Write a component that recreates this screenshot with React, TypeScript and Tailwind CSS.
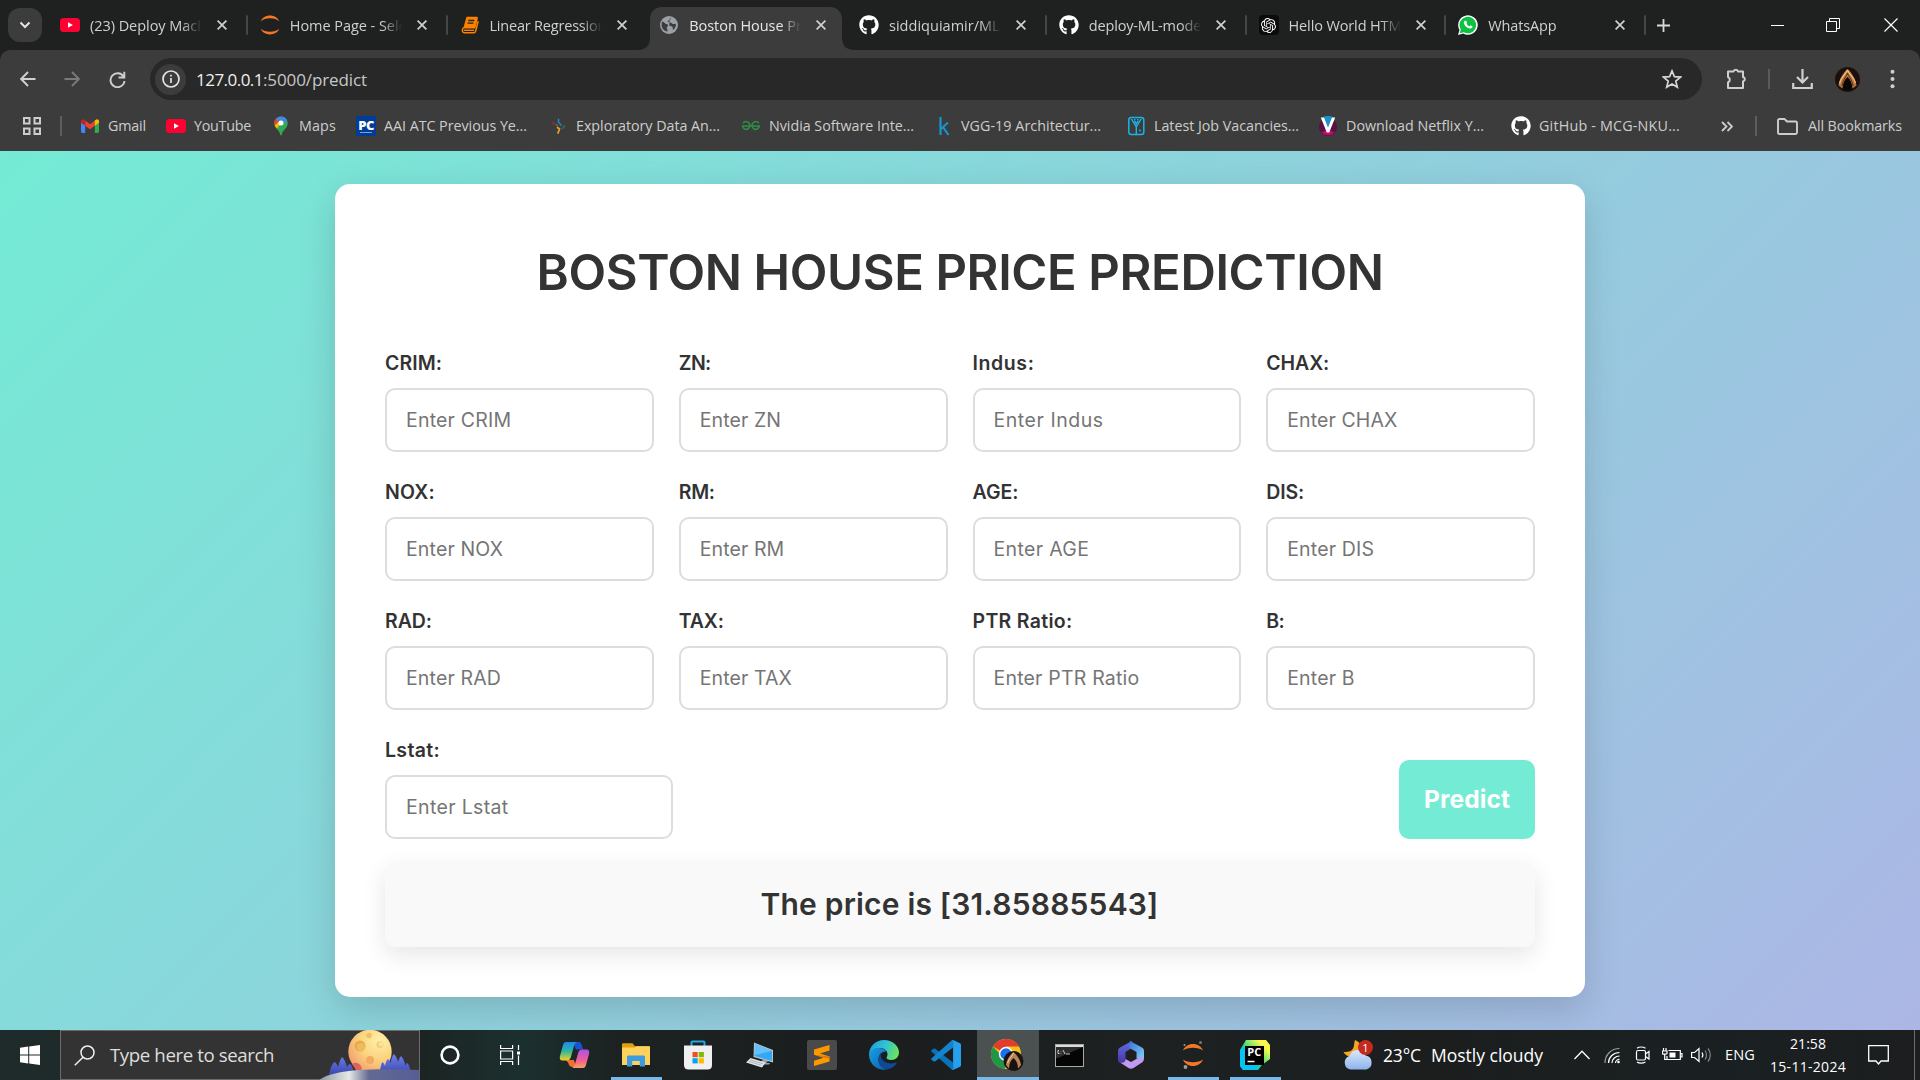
import React, { useLayoutEffect, useRef, useState } from "react";
import { FaGithub } from "react-icons/fa";
import { SiOpenai } from "react-icons/si";

/* Spreads a line of text over the width of its box by adjusting the letter spacing. */
function Fit({ text, className }: { text: string; className: string }) {
  const box = useRef<HTMLSpanElement>(null);
  const inner = useRef<HTMLSpanElement>(null);
  const [spacing, setSpacing] = useState(0);
  useLayoutEffect(() => {
    if (!box.current || !inner.current) return;
    const have = inner.current.getBoundingClientRect().width;
    const want = box.current.getBoundingClientRect().width;
    setSpacing((want - have) / text.length);
  }, [text]);
  return (
    <span ref={box} className={`block shrink-0 whitespace-pre ${className}`}>
      <span ref={inner} className="inline-block" style={{ letterSpacing: `${spacing}px` }}>
        {text}
      </span>
    </span>
  );
}

/* ---------- small icons ---------- */

const YouTubeIcon = () => (
  <svg width="20" height="20" viewBox="0 0 20 20">
    <rect x="0" y="3" width="20" height="14" rx="3.5" fill="#ff0033" />
    <path d="M8 7.2v5.6l4.9-2.8z" fill="#fff" />
  </svg>
);

const JupyterTabIcon = () => (
  <svg width="20" height="20" viewBox="0 0 20 20" fill="#f37726">
    <path d="M.6 6.2C2.4 2.600 5.900.5 10 .5s7.600 2.100 9.400 5.700C17 4.200 13.700 3.200 10 3.200S3 4.200.6 6.200z" />
    <path d="M.6 13.800c1.800 3.600 5.300 5.700 9.400 5.700s7.600-2.100 9.400-5.700c-2.400 2-5.700 3-9.400 3s-7-1-9.400-3z" />
  </svg>
);

const NotebookIcon = () => (
  <svg width="20" height="20" viewBox="0 0 20 20">
    <path d="M6.500 1.800h10c1 0 1.500.7 1.300 1.600l-2.500 10H3.200z" fill="#f98200" />
    <path d="M3.400 12.500C1.800 15.500 2.200 17.700 4.200 17.700h9.600c.9 0 1.500-.5 1.800-1.500l2.600-10" fill="none" stroke="#f98200" strokeWidth="1.500" />
    <path d="M4 15.300h10" stroke="#f98200" strokeWidth="1.400" />
    <path d="M8.300 5.500h6M7.500 8.200h6" stroke="#2b2118" strokeWidth="1.300" />
  </svg>
);

const GlobeIcon = () => (
  <svg width="20" height="20" viewBox="0 0 20 20">
    <circle cx="10" cy="10" r="9" fill="#9aa0a6" />
    <path
      d="M3 6.500c1.800 0 2.200 1.500 3.500 2.200 1 .6 2.600.3 2.600 1.600 0 1.100-1.500 1.200-1.300 2.600.1 1.300 1 1.800.8 3.600-3.500-.4-6-3.200-6-6.500 0-1.300.1-2.400.4-3.500zM11 2.700c1.300.7.700 1.800-.1 2.300-.8.600-2.200.5-2.200 1.600 0 1 1.500.7 2.600.9 1.300.2 1.600 1.400 2.900 1.500 1 .1 1.600-.5 2.700-.3.200 2.600-.9 4.900-2.900 6.300-.4-1.300.2-2.500-.7-3.300-.9-.8-2.700-.3-3.100-1.600"
      fill="#3c3c3c"
    />
  </svg>
);

const GithubIcon = () => <FaGithub size={20} color="#ffffff" />;

const OpenAIIcon = () => (
  <span className="flex h-5 w-5 items-center justify-center rounded-[4px] bg-[#0b0b0b]">
    <SiOpenai size={15} color="#ffffff" />
  </span>
);

const WhatsAppIcon = () => (
  <svg width="20" height="20" viewBox="0 0 20 20">
    <path d="M0 20l1.500-5A9.800 9.800 0 1 1 5.200 18.600z" fill="#fff" />
    <path d="M1.700 18.300l1.100-3.800a8.300 8.300 0 1 1 3 2.800z" fill="#0cc143" />
    <path
      d="M7.600 5.700c.4-.1.600.1.800.5l.6 1.300c.1.300 0 .5-.5 1.100.6 1.300 1.500 2.200 2.900 2.900l.9-1c.2-.2.4-.2.600-.1l1.500.8c.2.200.1.900-.2 1.400-.5.800-1.500 1.200-2.600.9-2.900-.8-4.700-2.600-5.600-4.800-.4-1.200 0-2.400.8-2.900z"
      fill="#fff"
    />
  </svg>
);

const CloseIcon = () => (
  <svg width="10" height="10" viewBox="0 0 10 10" stroke="#d0d0d0" strokeWidth="1.700">
    <path d="M.6.6l8.800 8.800M9.400.6L.6 9.400" />
  </svg>
);

const GmailIcon = () => (
  <svg width="20" height="20" viewBox="0 0 20 20">
    <path d="M1 5v10.500c0 .8.600 1.400 1.300 1.400h2.900V8.300z" fill="#4285f4" />
    <path d="M19 5v10.500c0 .8-.6 1.400-1.300 1.400h-2.900V8.300z" fill="#34a853" />
    <path d="M5.200 4.600v5.200L10 13.300l4.800-3.500V4.600L10 8.200z" fill="#ea4335" />
    <path d="M14.800 4.600v5.200L19 6.700V5.200c0-1.900-1.900-2.700-3.200-1.500z" fill="#fbbc04" />
    <path d="M5.200 4.600v5.200L1 6.700V5.200c0-1.900 1.900-2.700 3.200-1.500z" fill="#c5221f" />
  </svg>
);

const MapsIcon = () => (
  <svg width="20" height="20" viewBox="0 0 20 20">
    <path d="M10 .4a6.700 6.700 0 0 0-6.700 6.800c0 1.600.6 3 1.400 4.200 1.900 2.700 4 3.800 4.600 7.400.2 1 1.200 1 1.400 0 .6-3.600 2.700-4.700 4.600-7.400.8-1.200 1.400-2.600 1.400-4.200A6.700 6.700 0 0 0 10 .4z" fill="#34a853" />
    <path d="M10 .4c-2 0-3.900.9-5.100 2.400l3.200 2.700L12.100.8A6.500 6.500 0 0 0 10 .4z" fill="#4285f4" />
    <path d="M4.900 2.800a6.700 6.700 0 0 0-1.100 6.800l4.300-4.100z" fill="#ea4335" />
    <path d="M3.800 9.600c.5 1.100 1.200 2 2 2.900l6.500-7.700L8.100 5.500z" fill="#fbbc04" />
    <path d="M12.100.8c1.900.6 3.300 2 4 3.700l-4.300 3.500-1-3.400z" fill="#4285f4" />
    <circle cx="10" cy="7" r="2.500" fill="#fff" />
  </svg>
);

const PcIcon = () => (
  <span className="flex h-5 w-5 flex-col items-center justify-center bg-[#003d96]">
    <span className="font-['Open_Sans',sans-serif] text-[13px] font-extrabold leading-[13px] tracking-[-0.5px] text-white">PC</span>
    <span className="h-px w-3 bg-[#7d9fd0]" />
  </span>
);

const AnalysisIcon = () => (
  <svg width="20" height="20" viewBox="0 0 20 20" fill="none" strokeWidth="1.800" strokeLinecap="round">
    <path d="M5 6.500l1 1.500" stroke="#8d3038" />
    <path d="M10.500 3.500v2.500l2.500 3" stroke="#2680b5" />
    <path d="M16.500 10l-2 2.500" stroke="#356e45" />
    <path d="M9.500 11.500l2 1.500-1.500 4" stroke="#e0a030" />
    <path d="M8 8.500l1.500 1" stroke="#8a6a30" strokeWidth="1.300" />
  </svg>
);

const GeeksIcon = () => (
  <svg width="20" height="20" viewBox="0 0 20 20" fill="none" stroke="#2f8d46" strokeWidth="1.600">
    <path d="M2.200 7.200c1-1.500 3-2 4.700-1.100 1.700 1 2.300 3.200 1.400 5.300-.8 1.700-2.900 2.500-4.600 1.600C2.300 12.300 1.500 11 1.500 10h16.800c0 1-.7 2.300-2.100 3-1.700.9-3.800.1-4.600-1.600-.9-2.100-.3-4.300 1.400-5.300 1.700-.9 3.700-.4 4.700 1.100" />
  </svg>
);

const KaggleIcon = () => (
  <svg width="20" height="20" viewBox="0 0 20 20" fill="none" stroke="#1a94cd" strokeWidth="2.200">
    <path d="M7.500 1v18M15 6.500l-7.300 6.700M10 11l5.500 8" />
  </svg>
);

const JobsIcon = () => (
  <svg width="20" height="20" viewBox="0 0 20 20" fill="none" stroke="#18b4e6" strokeWidth="1.500">
    <rect x="2.800" y="1.500" width="15" height="17" rx="2.500" />
    <path d="M6 4l4.300 6.800V18M14.600 4l-4.300 6.800M8.300 4.500l2 3.200 2-3.200" strokeWidth="1.400" />
    <path d="M5 3.500h10.500" strokeWidth="1.200" strokeDasharray="1.500 1.500" />
    <circle cx="14" cy="14.500" r=".9" fill="#18b4e6" stroke="none" />
  </svg>
);

const VIcon = () => (
  <svg width="20" height="20" viewBox="0 0 20 20">
    <circle cx="10" cy="11" r="9" fill="#5a0f45" />
    <path d="M3.500 16.500a9 9 0 0 0 13 0L10 13z" fill="#b80f6c" />
    <path d="M5 1.200A9.500 9.500 0 0 1 15 1.200L10 12z" fill="#1792c8" />
    <path d="M2.800 1.500h3.200L10 11.500l4-10h3.200L11.200 16.500H8.800z" fill="#fff" />
  </svg>
);

/* ---------- browser chrome ---------- */

const tabs = [
  { icon: <YouTubeIcon />, title: "(23) Deploy Machi", fit: "tracking-[-0.05px]", sep: true },
  { icon: <JupyterTabIcon />, title: "Home Page - Sele", fit: "tracking-[-0.05px]", sep: true },
  { icon: <NotebookIcon />, title: "Linear Regression", fit: "tracking-[-0.2px]", sep: false },
  { icon: <GlobeIcon />, title: "Boston House Pri", fit: "tracking-[-0.05px]", active: true, sep: false },
  { icon: <GithubIcon />, title: "siddiquiamir/ML-", fit: "tracking-[0.02px]", sep: true },
  { icon: <GithubIcon />, title: "deploy-ML-mode", fit: "tracking-[-0.16px]", sep: true },
  { icon: <OpenAIIcon />, title: "Hello World HTM", fit: "tracking-[-0.12px]", sep: true },
  { icon: <WhatsAppIcon />, title: "WhatsApp", fit: "tracking-[-0.12px]", sep: true },
];

function Tab({ icon, title, fit, active, sep }: { icon: React.ReactNode; title: string; fit: string; active?: boolean; sep: boolean }) {
  return (
    <div className="relative flex h-[50px] w-[199.75px] shrink-0 items-center pl-[10px]">
      {active && (
        <svg className="absolute left-[-11px] top-[7px]" width="218" height="43" viewBox="0 0 218 43">
          <path d="M0 43c8 0 12-5 12-12V12C12 5 17 0 24 0h168c7 0 12 5 12 12v19c0 7 4 12 12 12z" fill="#3c3c3c" />
        </svg>
      )}
      <span className="relative w-5">{icon}</span>
      <span
        className={`relative ml-[10px] mt-px w-[112px] overflow-hidden whitespace-nowrap text-[14.500px] leading-5 [mask-image:linear-gradient(to_right,#000_82%,transparent)] ${fit} ${
          active ? "text-[#e6e6e6]" : "text-[#cfcfcf]"
        }`}
      >
        {title}
      </span>
      <span className="relative ml-[15px] block w-[10px]">
        <CloseIcon />
      </span>
      <span className="grow" />
      {sep && <span className="mr-[2px] h-5 w-[2px] rounded bg-[#454646]" />}
    </div>
  );
}

function TabStrip() {
  return (
    <div className="flex h-[50px] items-center bg-[#1f2120]">
      <div className="ml-2 flex h-[34px] w-[34px] shrink-0 items-center justify-center rounded-[12px] bg-[#3c3c3c]">
        <svg width="12" height="8" viewBox="0 0 12 8" fill="none" stroke="#e3e3e3" strokeWidth="2">
          <path d="M1.500 1.500L6 6l4.500-4.500" />
        </svg>
      </div>
      <div className="ml-[8px] flex">
        {tabs.map((t) => (
          <Tab key={t.title} {...t} />
        ))}
      </div>
      <svg className="ml-[9px]" width="13" height="13" viewBox="0 0 13 13" stroke="#d8d8d8" strokeWidth="1.800">
        <path d="M6.500 0v13M0 6.500h13" />
      </svg>
      <div className="grow" />
      <div className="flex items-center pr-[22px]">
        <svg width="13" height="13" viewBox="0 0 13 13" stroke="#fff">
          <path d="M0 6.500h13" />
        </svg>
        <svg className="ml-[42px]" width="14" height="14" viewBox="0 0 14 14" fill="none" stroke="#fff">
          <path d="M.5 3.500h10v10H.5zM3.500 3.500v-3h10v10h-3" />
        </svg>
        <svg className="ml-[44px]" width="14" height="14" viewBox="0 0 14 14" stroke="#fff" strokeWidth="1.200">
          <path d="M.5.500l13 13M13.500.500l-13 13" />
        </svg>
      </div>
    </div>
  );
}

function AddressBar() {
  return (
    <div className="flex h-[58px] items-center pl-5 pr-[18px]">
      <svg width="16" height="16" viewBox="0 0 16 16" fill="none" stroke="#cfcfcf" strokeWidth="1.900">
        <path d="M15.500 8H1.500M8 1L1.200 8 8 15" />
      </svg>
      <svg className="ml-[28px]" width="16" height="16" viewBox="0 0 16 16" fill="none" stroke="#7a7a7a" strokeWidth="1.900">
        <path d="M.5 8h14M8 1l6.800 7L8 15" />
      </svg>
      <svg className="ml-[29px]" width="17" height="17" viewBox="0 0 17 17" fill="none" stroke="#cfcfcf" strokeWidth="1.900">
        <path d="M14.500 5.500A7 7 0 1 0 15.500 10M15.300.8v5.700H9.600" />
      </svg>
      <div className="ml-[24px] flex h-[42px] w-[1552px] items-center rounded-full bg-[#282828] pl-[5px] pr-5">
        <span className="flex h-[31px] w-[31px] items-center justify-center rounded-full bg-[#3c3c3c]">
          <svg width="18" height="18" viewBox="0 0 18 18" fill="none" stroke="#e3e3e3" strokeWidth="1.700">
            <circle cx="9" cy="9" r="8" />
            <path d="M9 8v5M9 4.800v1.700" />
          </svg>
        </span>
        <span className="ml-[10px] mt-px flex text-[17px] leading-6">
          <Fit text="127.0.0.1" className="w-[67px] text-[#f0f0f0]" />
          <Fit text=":5000/predict" className="w-[104px] text-[#c7c7c7]" />
        </span>
        <span className="grow" />
        <svg width="20" height="20" viewBox="0 0 20 20" fill="none" stroke="#d5d5d5" strokeWidth="1.700">
          <path d="M10 1.900l2.400 5.700 6.100.5-4.700 4 1.500 6L10 14.900l-5.300 3.200 1.500-6-4.700-4 6.100-.5z" />
        </svg>
      </div>
      <svg className="ml-[24px]" width="21" height="22" viewBox="0 0 21 22" fill="none" stroke="#cfcfcf" strokeWidth="2" strokeLinejoin="round">
        <path d="M2 3.500h5.500a2.300 2.300 0 0 1 4.500 0h5V9a2.300 2.300 0 0 1 0 4.500V20H2v-5.500a3 3 0 0 0 0-5.500z" />
      </svg>
      <span className="ml-[21px] h-5 w-[2px] bg-[#5b5b5b]" />
      <svg className="ml-[22px]" width="21" height="22" viewBox="0 0 21 22" fill="none" stroke="#cfcfcf" strokeWidth="2.200">
        <path d="M10.500 1v13M5 9l5.500 5.500L16 9M1.200 15v5h18.600v-5" />
      </svg>
      <svg className="ml-[22px]" width="25" height="25" viewBox="0 0 25 25">
        <circle cx="12.500" cy="12.500" r="12.500" fill="#1a110c" />
        <path d="M12.500 2c4.500 4 8 9.500 9 16.500l-4 3c-.3-5-1.800-8.500-5-11.500-3.200 3-4.700 6.500-5 11.500l-4-3C4.500 11.500 8 6 12.500 2z" fill="#b9743a" />
        <path d="M12.500 3c-1.500 4-6.500 7-8 13.500M12.500 3c1.200 4 6.500 7 8 13" stroke="#f0c08a" strokeWidth="1.200" fill="none" />
        <path d="M12.500 6c-.5 3-4.500 6-5.500 13M12.500 6c.5 3 4.500 6 5.500 13" stroke="#5a2f14" strokeWidth="1" fill="none" />
        <path d="M8 23c0-6 1.500-9.500 4.500-12.500C15.500 13.500 17 17 17 23z" fill="#080606" />
      </svg>
      <svg className="ml-[30px]" width="5" height="20" viewBox="0 0 5 20" fill="#cfcfcf">
        <circle cx="2.500" cy="2.700" r="2" />
        <circle cx="2.500" cy="10" r="2" />
        <circle cx="2.500" cy="17.300" r="2" />
      </svg>
    </div>
  );
}

const bookmarks = [
  { icon: <GmailIcon />, label: "Gmail", slot: "w-[86px]", width: "w-[38px]" },
  { icon: <YouTubeIcon />, label: "YouTube", slot: "w-[105px]", width: "w-[57px]" },
  { icon: <MapsIcon />, label: "Maps", slot: "w-[85px]", width: "w-[37px]" },
  { icon: <PcIcon />, label: "AAI ATC Previous Ye...", slot: "w-[192px]", width: "w-[143px]" },
  { icon: <AnalysisIcon />, label: "Exploratory Data An...", slot: "w-[193px]", width: "w-[144px]" },
  { icon: <GeeksIcon />, label: "Nvidia Software Inte...", slot: "w-[192px]", width: "w-[145px]" },
  { icon: <KaggleIcon />, label: "VGG-19 Architectur...", slot: "w-[193px]", width: "w-[140px]" },
  { icon: <JobsIcon />, label: "Latest Job Vacancies...", slot: "w-[192px]", width: "w-[145px]" },
  { icon: <VIcon />, label: "Download Netflix Y...", slot: "w-[193px]", width: "w-[138px]" },
  { icon: <GithubIcon />, label: "GitHub - MCG-NKU...", slot: "w-[170px]", width: "w-[141px]" },
];

function BookmarksBar() {
  return (
    <div className="flex h-[43px] items-center pb-[7px] pl-[23px] pr-[18px] text-[14.300px] leading-5 text-[#cdcdcd]">
      <svg width="18" height="18" viewBox="0 0 18 18" fill="none" stroke="#cdcdcd" strokeWidth="2">
        <path d="M1 1h5.500v5.500H1zM11.500 1H17v5.500h-5.500zM1 11.500h5.500V17H1zM11.500 11.500H17V17h-5.500z" />
      </svg>
      <span className="ml-[19px] h-5 w-[2px] bg-[#5d5d5d]" />
      <div className="ml-[18px] flex">
        {bookmarks.map((b) => (
          <div key={b.label} className={`flex shrink-0 items-center gap-2 ${b.slot}`}>
            <span className="w-5 shrink-0">{b.icon}</span>
            <Fit text={b.label} className={b.width} />
          </div>
        ))}
      </div>
      <span className="grow" />
      <svg width="12" height="11" viewBox="0 0 12 11" fill="none" stroke="#cdcdcd" strokeWidth="1.800">
        <path d="M1 1l4.500 4.500L1 10M6.500 1L11 5.500 6.500 10" />
      </svg>
      <span className="ml-[22px] h-5 w-[2px] bg-[#5d5d5d]" />
      <svg className="ml-[20px]" width="21" height="17" viewBox="0 0 21 17" fill="none" stroke="#cdcdcd" strokeWidth="1.900" strokeLinejoin="round">
        <path d="M1 2.500C1 1.500 1.500 1 2.500 1h5l2.500 2.500h8.500c1 0 1.500.5 1.500 1.500v9.500c0 1-.5 1.500-1.500 1.500h-16c-1 0-1.500-.5-1.500-1.500z" />
      </svg>
      <Fit text="All Bookmarks" className="ml-[10px] w-[94px]" />
    </div>
  );
}

/* ---------- page ---------- */

const fields = [
  ["CRIM", "w-[57px]", "tracking-[0.2px]"],
  ["ZN", "w-[32px]", "tracking-[0.1px]"],
  ["Indus", "w-[62px]", "tracking-[0.55px]"],
  ["CHAX", "w-[63px]", "tracking-[0.1px]"],
  ["NOX", "w-[50px]", "tracking-[0.15px]"],
  ["RM", "w-[36px]", "tracking-[0.1px]"],
  ["AGE", "w-[46px]", "tracking-[0.35px]"],
  ["DIS", "w-[38px]", "tracking-[0.15px]"],
  ["RAD", "w-[47px]", "tracking-[0.15px]"],
  ["TAX", "w-[45px]", "tracking-[0.1px]"],
  ["PTR Ratio", "w-[100px]", "tracking-[0.2px]"],
  ["B", "w-[18px]", "tracking-[0.15px]"],
];

function Field({ name, labelWidth, fit }: { name: string; labelWidth: string; fit: string }) {
  return (
    <div className="flex flex-col">
      <label className="mb-[10px] h-[30px] text-[19.500px] font-semibold leading-[30px] text-[#333]">
        <Fit text={`${name}:`} className={labelWidth} />
      </label>
      <input
        className={`h-16 w-full rounded-[10px] border-2 border-[#ddd] bg-white pl-[19px] pr-[17px] text-[19.500px] outline-none placeholder:text-[#757575] ${fit}`}
        placeholder={`Enter ${name}`}
      />
    </div>
  );
}

function Page() {
  return (
    <main className="flex h-[879px] justify-center bg-[linear-gradient(135deg,#74ebd5,#acb6e5)] pt-[33px] font-['Inter',sans-serif]">
      <div className="h-[813px] w-[1250px] rounded-[15px] bg-white px-[50px] pt-[51px] shadow-[0_12px_37px_rgba(0,0,0,0.15)]">
        <h1 className="flex h-[75px] items-center justify-center text-[49px] font-semibold text-[#333]">
          <Fit text="BOSTON HOUSE PRICE PREDICTION" className="w-[847px]" />
        </h1>
        <form className="mt-[38px]">
          <div className="grid grid-cols-4 gap-[25px]">
            {fields.map(([name, labelWidth, fit]) => (
              <Field key={name} name={name} labelWidth={labelWidth} fit={fit} />
            ))}
          </div>
          <div className="mt-[25px] flex items-end justify-between">
            <div className="w-[288px]">
              <Field name="Lstat" labelWidth="w-[55px]" fit="tracking-[0.35px]" />
            </div>
            <button type="button" className="flex h-[79px] w-[136px] items-center justify-center rounded-[10px] bg-[#74ebd5] text-[24.500px] font-bold text-white">
              <Fit text="Predict" className="w-[86px]" />
            </button>
          </div>
        </form>
        <div className="mt-[23px] flex h-[85px] items-center justify-center rounded-[10px] bg-[#f9f9f9] pr-px text-[30px] font-semibold text-[#333] shadow-[0_8px_25px_rgba(0,0,0,0.1)]">
          <Fit text="The price is [31.85885543]" className="w-[398px]" />
        </div>
      </div>
    </main>
  );
}

/* ---------- taskbar ---------- */

const SearchArt = () => (
  <svg width="109" height="50" viewBox="310 1030 109 50">
    <defs>
      <radialGradient id="moon" cx=".7" cy=".25" r=".9">
        <stop offset="0" stopColor="#fff0a8" />
        <stop offset=".5" stopColor="#fbd27e" />
        <stop offset="1" stopColor="#f0906a" />
      </radialGradient>
      <linearGradient id="spike" x1="0" y1="0" x2="0" y2="1">
        <stop offset="0" stopColor="#6f80f0" />
        <stop offset="1" stopColor="#3a46ac" />
      </linearGradient>
      <linearGradient id="hill" x1="0" y1="0" x2="1" y2="0">
        <stop offset="0" stopColor="#8d97a0" />
        <stop offset=".3" stopColor="#e6e8e4" />
        <stop offset=".5" stopColor="#626a92" />
        <stop offset="1" stopColor="#555d96" />
      </linearGradient>
    </defs>
    <circle cx="370" cy="1051.500" r="21.700" fill="url(#moon)" />
    <circle cx="360" cy="1046" r="5.500" fill="#e3ab50" />
    <circle cx="361" cy="1047" r="4" fill="#f0bb5c" />
    <circle cx="380" cy="1044.500" r="3.600" fill="#f3cb74" />
    <circle cx="381" cy="1044" r="2.600" fill="#fde295" />
    <circle cx="369" cy="1035.500" r="2.700" fill="#eec066" />
    <circle cx="370" cy="1060" r="4" fill="#f3a863" />
    <path d="M352 1064a6 6 0 0 1 9.500 6l-5 1z" fill="#d9655a" />
    <path d="M329 1075c1-5 2.500-11 5.500-13 2 1 3 3 3.500 5 1-4 2.500-8 4-10 2.500 2 4 6 5 10 1-2 2-3 3-3 2 1 3.500 6 4 9zM380 1071c.5-4 1.500-8 2.500-9 1.500 1 2 3 2.500 4 .5-3 1.500-6 3-7 1.500 1 2 3 2.500 4 1-5 2-8 3.500-9 2 2 3.500 5 4 8 1-3 2-5 3-6 2 2 4 6 4.500 10 .5-2 1-3 1.500-3 2 1 3 5 3.500 8z" fill="url(#spike)" />
    <path d="M319 1080c8-6 24-9 40-10s40-1 60 0v10z" fill="url(#hill)" />
  </svg>
);

const CopilotIcon = () => (
  <svg width="31" height="30" viewBox="0 0 31 30">
    <defs>
      <linearGradient id="cpl" x1="0" y1="0" x2="0" y2="1">
        <stop offset="0" stopColor="#1c8af0" />
        <stop offset=".5" stopColor="#2fb7a0" />
        <stop offset="1" stopColor="#f5d020" />
      </linearGradient>
      <linearGradient id="cpr" x1="0" y1="0" x2="0" y2="1">
        <stop offset="0" stopColor="#b050e8" />
        <stop offset=".6" stopColor="#f06090" />
        <stop offset="1" stopColor="#fba060" />
      </linearGradient>
    </defs>
    <path d="M14 2h5c3 0 3.500 2 4.200 4.500l1 3H17z" fill="#1a52d0" />
    <path d="M7 20h8l2 7h-3c-3 0-4-1.500-4.700-4z" fill="#f07030" />
    <path d="M7 2h11c-2 1-2.500 2.500-3.300 5l-3 10.500c-.7 2-1.700 3-4 3H3.500C1 20.500.300 18.500 1 16L4 5c.6-2 1.500-3 3-3z" fill="url(#cpl)" />
    <path d="M24 28H13c2-1 2.500-2.500 3.300-5l3-10.500c.7-2 1.700-3 4-3h4.200c2.500 0 3.200 2 2.500 4.500L27 25c-.6 2-1.500 3-3 3z" fill="url(#cpr)" />
  </svg>
);

const ExplorerIcon = () => (
  <svg width="28" height="24" viewBox="0 0 28 24">
    <path d="M0 1.500C0 .6.600.3 1.500.3h9l2.500 3H28V8H0z" fill="#dfa010" />
    <path d="M0 4.500h12.500l1.500-1.300h12.500c1 0 1.500.5 1.500 1.300v17.500H0z" fill="#fcd25c" />
    <path d="M5 23.500V14c0-1 .5-1.500 1.500-1.500h15c1 0 1.500.500 1.500 1.500v9.500h-5.200V18h-7.600v5.500z" fill="#3d9be2" />
  </svg>
);

const StoreIcon = () => (
  <svg width="30" height="30" viewBox="0 0 30 30">
    <path d="M8.500 7V2.500c0-.6.400-1 1-1h11c.6 0 1 .4 1 1V7" fill="none" stroke="#22a7e8" strokeWidth="2" />
    <path d="M1 5.500h28V25c0 3-1.500 4.500-4.500 4.500h-19C2.500 29.500 1 28 1 25z" fill="#f0f0f0" />
    <path d="M9.500 12h5.200v5.200H9.500z" fill="#f04e23" />
    <path d="M15.700 12h5.200v5.200h-5.200z" fill="#80ba01" />
    <path d="M9.500 18.200h5.200v5.200H9.500z" fill="#02a4ef" />
    <path d="M15.700 18.200h5.200v5.200h-5.200z" fill="#ffb902" />
  </svg>
);

const ComputerIcon = () => (
  <svg width="28" height="26" viewBox="0 0 28 26">
    <path d="M8 .5L27 8v12.500L7.500 15z" fill="#b9c6cf" />
    <path d="M9 2l17 7v10L8.500 14z" fill="#35a8f5" />
    <path d="M9 2l17 7-17 4z" fill="#63c0fa" />
    <path d="M18 17l4 2-2 2h4l-1 1.500h-7l-3-1.500z" fill="#9aa5ac" />
    <path d="M4.500 16l15 4.500-3.500 5L0 20.500z" fill="#e2e6e8" />
    <path d="M4 17.800l13 4M2.500 19.300l13 4" stroke="#9da6ac" strokeWidth=".8" />
  </svg>
);

const SublimeIcon = () => (
  <svg width="30" height="30" viewBox="0 0 30 30">
    <rect width="30" height="30" rx="2" fill="#4a4a4a" />
    <path d="M22.500 5v5.500L13 13.500l9.500 3v5L7 26v-5.300l9.500-3-9.500-3V9.500z" fill="#ff9800" />
    <path d="M7 14.700l15.500 1.800v2.300L7 14.700z" fill="#d97a00" />
  </svg>
);

const EdgeIcon = () => (
  <svg width="30" height="30" viewBox="0 0 30 30">
    <defs>
      <linearGradient id="edgeTop" x1="0" y1=".2" x2="1" y2=".5">
        <stop offset="0" stopColor="#1e9be0" />
        <stop offset=".5" stopColor="#30c0d8" />
        <stop offset="1" stopColor="#6be35c" />
      </linearGradient>
      <linearGradient id="edgeLow" x1="0" y1="0" x2="1" y2="1">
        <stop offset="0" stopColor="#1aa0e0" />
        <stop offset="1" stopColor="#0a5cb0" />
      </linearGradient>
    </defs>
    <path d="M0 15C0 6.500 6.500 0 15 0s15 6 15 12.500c0 4.500-3.500 7.500-7.500 7.500-3.500 0-5-1.200-5-2.200s1-1.300 1-3.800c0-3-3-6-7.500-6C5 8 1 12 0 15z" fill="url(#edgeTop)" />
    <path d="M0 15c.5-4.500 5-7 9.500-7 4 0 7 1.500 8 3.500-3.500-.5-8 3-8 8 0 5.500 4.500 10 10 9.500A15 15 0 0 1 0 15z" fill="url(#edgeLow)" />
    <path d="M12 12.500c-1.500 1.500-2.500 4-2.500 7 0 5.500 5 10.500 11 9.200 3-.7 5.500-3 7-5.200.5-.7 0-1.300-.8-.9-1.500.7-3 1-4.500 1-6.500 0-10.500-4.500-10.500-8 0-1.300.3-2.300.3-3.100z" fill="#104a94" />
  </svg>
);

const VsCodeIcon = () => (
  <svg width="30" height="30" viewBox="0 0 30 30">
    <path d="M2.600 8.700c.5-.4 1.200-.4 1.700 0L22 22.500V30c-.6 0-1-.2-1.400-.6L.6 11.700c-.5-.5-.5-1.200 0-1.600z" fill="#0a72b8" />
    <path d="M2.600 21.300c.5.4 1.200.4 1.700 0L22 7.500V0c-.6 0-1 .2-1.400.6L.6 18.300c-.5.5-.5 1.200 0 1.600z" fill="#1485cc" />
    <path d="M20.600.6C21 .2 21.700-.1 22.500.2l6 2.700c.9.4 1.500 1 1.500 2v20.200c0 1-.6 1.600-1.500 2l-6 2.700c-.8.300-1.500 0-1.900-.4.800.5 1.500 0 1.500-1V1.600c0-1-.7-1.500-1.500-1z" fill="#25a0ee" />
  </svg>
);

const ChromeIcon = () => (
  <svg width="34" height="34" viewBox="0 0 34 34">
    <circle cx="15" cy="16" r="15" fill="#fbc116" />
    <path d="M15 16L2 8.500A15 15 0 0 1 28 8.500H15z" fill="#e33b2e" />
    <path d="M15 16h-6L2 8.500A15 15 0 0 0 13.500 31l5-9z" fill="#229648" />
    <circle cx="15" cy="16" r="7.200" fill="#fff" />
    <circle cx="15" cy="16" r="5.700" fill="#1a6ff0" />
    <circle cx="22.500" cy="23" r="10" fill="#1b130f" />
    <path d="M22.500 14c4 3.500 7 8 7.500 13l-3 3.500c-.3-5-1.500-8-4.500-10.500-3 2.500-4.200 5.500-4.500 10.500l-3-3.500c.5-5 3.500-9.500 7.500-13z" fill="#b98458" />
    <path d="M22.500 15c-1 3-4.500 5-6 10" stroke="#ecd0a8" fill="none" />
  </svg>
);

const TerminalIcon = () => (
  <svg width="29" height="23" viewBox="0 0 29 23">
    <rect x=".5" y=".5" width="28" height="22" fill="#050505" stroke="#a9a9a9" />
    <path d="M1 1h27v2H1z" fill="#dcdcdc" />
    <path d="M1 3h27L3 14H1z" fill="#2d2d2d" />
    <path d="M4 6.500H3v3h1.500M6 7v.5M6 9v.5M8 6l2 4M11 10h4" stroke="#dcdcdc" strokeWidth=".9" fill="none" />
  </svg>
);

const M365Icon = () => (
  <svg width="28" height="28" viewBox="0 0 28 28">
    <defs>
      <linearGradient id="mA" x1="0" y1="0" x2="0" y2="1">
        <stop offset="0" stopColor="#5f6fe0" />
        <stop offset="1" stopColor="#4a35a5" />
      </linearGradient>
      <linearGradient id="mB" x1="0" y1="0" x2="1" y2="1">
        <stop offset="0" stopColor="#3d6fd8" />
        <stop offset="1" stopColor="#7fd5f5" />
      </linearGradient>
    </defs>
    <path d="M15 0L3 6.500C1.500 7.500 1 8.500 1 10v9c0 2 1 3 3 3 3 0 4.500-1.500 4.500-4.500V11l6.500-4z" fill="url(#mA)" />
    <path d="M13 0l12 6.500c1.500 1 2 2 2 3.500v8.500l-7.500-1V11L12.500 7c-1-3 0-5.500.5-7z" fill="url(#mB)" />
    <path d="M27 16c0 3-.5 4.500-2 5.500l-8.500 5.500c-1.700 1-3.300 1-5 0L3 21.500c4 .8 5.500-1 5.500-3.500l5.500 3 8-4.500z" fill="#c09af0" />
  </svg>
);

const JupyterIcon = () => (
  <svg width="28" height="28" viewBox="0 0 28 28" fill="#f37726">
    <path d="M4 9.500C5.500 5.500 9.500 3 14 3s8.500 2.500 10 6.500C21.500 7.700 18 6.800 14 6.800S6.500 7.700 4 9.500z" />
    <path d="M4 18.500c1.500 4 5.500 6.500 10 6.500s8.500-2.500 10-6.500c-2.500 1.800-6 2.700-10 2.700s-7.500-.900-10-2.700z" />
    <circle cx="5.500" cy="4" r="1" fill="#9e9e9e" />
    <circle cx="21.500" cy="1.500" r="1.500" fill="#767677" />
    <circle cx="6.500" cy="26" r="1.900" fill="#9e9e9e" />
  </svg>
);

const PyCharmIcon = () => (
  <span className="relative block h-[30px] w-[30px]">
    <svg width="30" height="30" viewBox="0 0 30 30">
      <defs>
        <linearGradient id="pyc" x1="0" y1="1" x2="1" y2="0">
          <stop offset="0" stopColor="#07c3f2" />
          <stop offset=".45" stopColor="#21d789" />
          <stop offset=".8" stopColor="#fcf84a" />
        </linearGradient>
      </defs>
      <path d="M6 0h20l4 5v14l-8 6-4 5H3l-3-4V10z" fill="url(#pyc)" />
      <path d="M0 10l6-4v19h13l-2 5H3l-3-4z" fill="#07c3f2" />
      <path d="M5 6h19v19H5z" fill="#000" />
      <path d="M7.500 21.500h7" stroke="#fff" strokeWidth="1.500" />
    </svg>
    <span className="absolute left-[7px] top-[6px] font-['Open_Sans',sans-serif] text-[11px] font-bold leading-[11px] text-white">PC</span>
  </span>
);

const apps: { id: string; icon: React.ReactNode; state?: "open" | "active" }[] = [
  { id: "copilot", icon: <CopilotIcon /> },
  { id: "explorer", icon: <ExplorerIcon />, state: "open" },
  { id: "store", icon: <StoreIcon /> },
  { id: "computer", icon: <ComputerIcon /> },
  { id: "sublime", icon: <SublimeIcon /> },
  { id: "edge", icon: <EdgeIcon /> },
  { id: "vscode", icon: <VsCodeIcon /> },
  { id: "chrome", icon: <ChromeIcon />, state: "active" },
  { id: "terminal", icon: <TerminalIcon /> },
  { id: "m365", icon: <M365Icon /> },
  { id: "jupyter", icon: <JupyterIcon />, state: "open" },
  { id: "pycharm", icon: <PyCharmIcon />, state: "open" },
];

function Taskbar() {
  return (
    <footer className="flex h-[50px] items-stretch bg-[linear-gradient(to_right,#1f2b2b_0,#1b2423_22%,#1b302f_27%,#1c2222_32%,#1b1d1f_45%,#1d2122_60%,#1c1e1e_75%,#1a2022_88%,#1c1e1f_100%)] text-white">
      <div className="flex w-[60px] items-center justify-center">
        <svg width="20" height="20" viewBox="0 0 20 20" fill="#fff">
          <path d="M0 2.800l8.200-1.200v7.900H0zM9.200 1.500L20 0v9.500H9.200zM0 10.500h8.200v7.900L0 17.200zM9.200 10.500H20V20L9.200 18.500z" />
        </svg>
      </div>
      <div className="flex w-[360px] items-center border border-[#6b6b6b] bg-[#333] pl-[13px]">
        <svg width="21" height="21" viewBox="0 0 21 21" fill="none" stroke="#f0f0f0" strokeWidth="1.500">
          <circle cx="13.500" cy="7.500" r="6.500" />
          <path d="M9 12.200L.8 20.300" />
        </svg>
        <Fit text="Type here to search" className="ml-[15px] w-[164px] text-[18.700px] leading-6 text-[#dedede]" />
        <span className="grow" />
        <SearchArt />
      </div>
      <div className="flex w-[60px] items-center justify-center">
        <svg width="20" height="20" viewBox="0 0 20 20" fill="none" stroke="#fff" strokeWidth="2.600">
          <circle cx="10" cy="10" r="8.400" />
        </svg>
      </div>
      <div className="flex w-[64px] items-center justify-center pr-[4px]">
        <svg width="20" height="20" viewBox="0 0 20 20" fill="none" stroke="#fff" strokeWidth="1.200">
          <path d="M.6 0v3.500h12V0M.6 6h12v8h-12zM.6 20v-3.500h12V20M18.500 0v5M18.500 10.500V20" />
          <path d="M17 6.500h3v3h-3z" fill="#fff" stroke="none" />
        </svg>
      </div>
      <div className="flex">
        {apps.map((a) => (
          <div key={a.id} className={`relative flex w-[61.900px] items-center justify-center pr-px ${a.state === "active" ? "bg-[#4b5050]" : ""}`}>
            {a.icon}
            {a.state === "open" && <span className="absolute bottom-0 left-[5px] h-[3px] w-[51px] bg-[#76b9ed]" />}
            {a.state === "active" && <span className="absolute bottom-0 left-0 h-[3px] w-full bg-[#76b9ed]" />}
          </div>
        ))}
      </div>
      <span className="grow" />
      <div className="flex w-[577px] shrink-0 items-center">
        <div className="relative">
          <svg width="31" height="30" viewBox="0 0 31 30">
            <defs>
              <linearGradient id="cloud" x1="0" y1="0" x2="0" y2="1">
                <stop offset="0" stopColor="#d8e8fb" />
                <stop offset="1" stopColor="#8eb3ea" />
              </linearGradient>
            </defs>
            <path d="M12 0c-2 6 1 12-11.500 12C3 17 10 19 15 14s4-11-3-14z" fill="#f5a623" />
            <path d="M7.500 29.500a7 7 0 0 1-1-13.500A8.500 8.500 0 0 1 22.500 15.500a7.200 7.200 0 0 1 1 14z" fill="url(#cloud)" />
          </svg>
          <span className="absolute left-[15px] top-0 flex h-[15px] w-[15px] items-center justify-center rounded-full bg-[#c42b1c] font-['Open_Sans',sans-serif] text-[11px] leading-none">1</span>
        </div>
        <Fit text="23°C" className="ml-[9px] w-[38px] text-[17.500px] leading-6" />
        <Fit text="Mostly cloudy" className="ml-[10px] w-[112px] text-[17.500px] leading-6" />
        <svg className="ml-[31px]" width="16" height="10" viewBox="0 0 16 10" fill="none" stroke="#fff" strokeWidth="1.300">
          <path d="M.5 9L8 1.300 15.500 9" />
        </svg>
        <svg className="ml-[14px]" width="16" height="17" viewBox="0 0 16 17" fill="none" stroke="#fff" strokeWidth="1.200">
          <path d="M1 16C1 8 7 1.500 15.500 1.500" stroke="#9a9a9a" />
          <path d="M4.500 16c0-6 5-10.500 11-10.500M8 16c0-4 3.500-7 7.500-7M11.500 16c0-2 1.800-3.700 4-3.700" />
          <circle cx="14.500" cy="15" r="1.300" fill="#fff" stroke="none" />
        </svg>
        <svg className="ml-[15px]" width="16" height="18" viewBox="0 0 16 18" fill="none" stroke="#fff" strokeWidth="1.200">
          <rect x="1.500" y="4.500" width="9" height="9.500" rx="1.500" />
          <path d="M10.500 8L14 5.500v7.500l-3.500-2.500M2 2.200C4 .6 8 .6 10.500 2.200M2 16c2 1.500 6 1.500 8.500 0" />
        </svg>
        <svg className="ml-[11px]" width="21" height="15" viewBox="0 0 21 15" fill="none" stroke="#fff" strokeWidth="1.200">
          <path d="M6.500 2.500h11.800v9H5V8M18.300 5.500H20v3.500h-1.700M1.500 0v3M4 0v3M.5 3h4.500v2.500c0 1-4.500 1-4.500 0zM2.700 6.500v5H5" />
          <path d="M7.500 4.500h6v5h-6z" fill="#fff" stroke="none" />
        </svg>
        <svg className="ml-[8px]" width="22" height="18" viewBox="0 0 22 18" fill="none" stroke="#fff" strokeWidth="1.200">
          <path d="M.6 6.500h3L8 2.500v13l-4.400-4h-3z" />
          <path d="M11 6.500c1 1.500 1 3.500 0 5" />
          <path d="M14 4.500c2 2.500 2 6.500 0 9M17 2.500c3 3.500 3 9.500 0 13" stroke="#858585" />
        </svg>
        <Fit text="ENG" className="ml-[12px] w-[30px] text-[14.500px] leading-6" />
        <div className="ml-[15px] flex w-[76px] flex-col items-center text-[14px] leading-[23px]">
          <Fit text="21:58" className="w-[36px]" />
          <Fit text="15-11-2024" className="w-[76px]" />
        </div>
        <svg className="ml-[22px]" width="21" height="20" viewBox="0 0 21 20" fill="none" stroke="#fff" strokeWidth="1.300">
          <path d="M.7.700h19.600v15.300h-7.300l-2.500 3-2.500-3H.7z" />
        </svg>
        <span className="ml-[25px] h-[50px] w-px bg-[#6a6e6e]" />
      </div>
    </footer>
  );
}

export default function App() {
  return (
    <div className="flex h-[1080px] w-[1920px] flex-col overflow-hidden bg-[#1f2120] font-['Open_Sans',sans-serif]">
      <TabStrip />
      <div className="h-[101px] rounded-t-[10px] bg-[#3c3c3c]">
        <AddressBar />
        <BookmarksBar />
      </div>
      <Page />
      <Taskbar />
    </div>
  );
}
